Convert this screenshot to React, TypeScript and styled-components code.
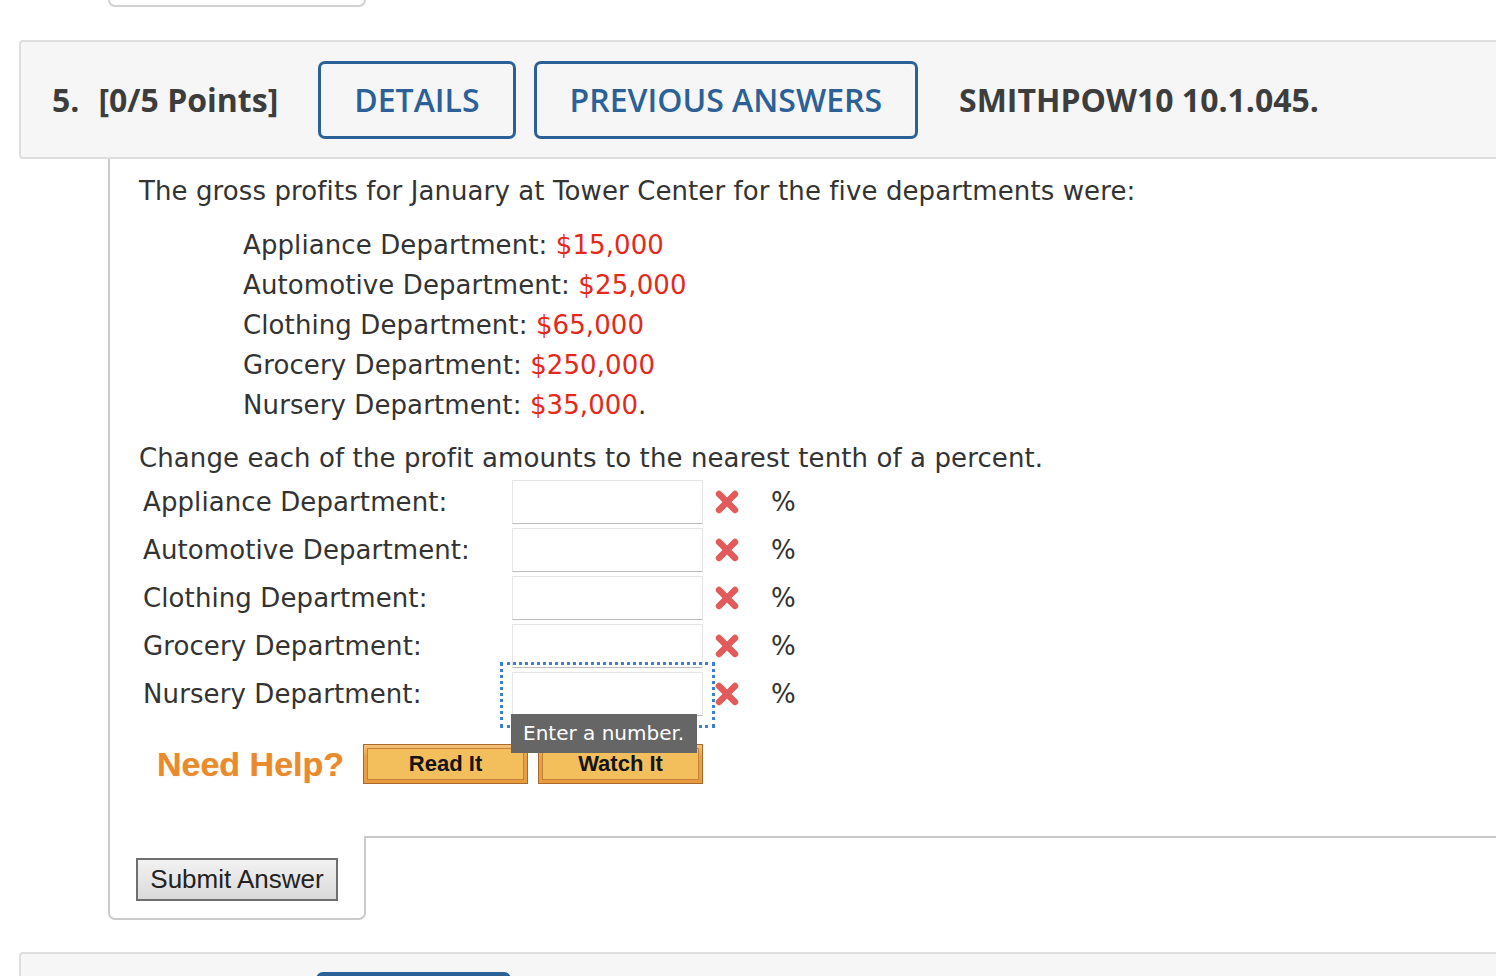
import styled, { createGlobalStyle } from "styled-components";

const GlobalStyle = createGlobalStyle`
  html, body {
    margin: 0;
    padding: 0;
    background: #fff;
    overflow: hidden;
  }
  body {
    font-family: "DejaVu Sans", Verdana, sans-serif;
    color: #333;
  }
`;

const Page = styled.div`
  width: 1560px;
`;

const PrevTab = styled.div`
  margin-left: 108px;
  width: 254px;
  height: 5px;
  border: 2px solid #d2d2d2;
  border-top: none;
  border-radius: 0 0 7px 7px;
`;

const Question = styled.section`
  margin-top: 33px;
`;

const Header = styled.div`
  margin-left: 19px;
  height: 115px;
  display: flex;
  align-items: center;
  padding-left: 31px;
  background: #f6f6f6;
  border: 2px solid #dedede;
  border-radius: 4px;
  font-family: "Open Sans", sans-serif;
  color: #3d3d3d;
`;

const Number = styled.span`
  font-size: 32px;
  font-weight: 700;
  margin-right: 19px;
`;

const Points = styled.span`
  font-size: 32px;
  font-weight: 700;
  margin-right: 40px;
`;

const HeaderButton = styled.button<{ $filled?: boolean }>`
  box-sizing: border-box;
  height: 78px;
  padding: 0 33px;
  margin-right: 18px;
  border: 3px solid #2b6197;
  border-radius: 7px;
  background: ${(p) => (p.$filled ? "#2b6197" : "transparent")};
  color: ${(p) => (p.$filled ? "#fff" : "#2b6197")};
  font-family: "Open Sans", sans-serif;
  font-size: 32px;
  font-weight: 600;
  cursor: pointer;
  &:last-of-type {
    margin-right: 41px;
  }
`;

const Code = styled.span`
  font-size: 32px;
  font-weight: 700;
`;

const Body = styled.div`
  margin-left: 108px;
`;

const Content = styled.div`
  border-left: 2px solid #cbcbcb;
  padding: 14px 0 52px 29px;
  font-size: 26px;
  letter-spacing: 0.1px;
`;

const Intro = styled.p`
  margin: 0;
  line-height: 36px;
`;

const DeptList = styled.div`
  margin-top: 16px;
  padding-left: 104px;
`;

const DeptLine = styled.div`
  line-height: 40px;
`;

const Amount = styled.span`
  color: #e4291a;
`;

const Task = styled.p`
  margin: 15px 0 0;
  line-height: 36px;
`;

const AnswerTable = styled.div`
  margin-top: 2px;
`;

const AnswerRow = styled.div`
  display: flex;
  align-items: center;
  height: 48px;
`;

const Label = styled.span`
  width: 369px;
  padding-left: 4px;
`;

const InputWrap = styled.span<{ $focused?: boolean }>`
  position: relative;
  display: inline-flex;
  ${(p) =>
    p.$focused &&
    `
    &::after {
      content: "";
      position: absolute;
      top: -10px;
      left: -12px;
      right: -12px;
      bottom: -12px;
      border: 3px dotted #3a7fd8;
      pointer-events: none;
    }
  `}
`;

const AnswerInput = styled.input`
  box-sizing: border-box;
  width: 191px;
  height: 44px;
  border: 1px solid #e6e6e6;
  border-bottom-color: #bdbdbd;
  background: #fff;
  outline: none;
  font-size: 22px;
`;

const Tooltip = styled.span`
  position: absolute;
  left: -1px;
  top: 42px;
  z-index: 2;
  height: 39px;
  line-height: 39px;
  padding: 0 13px 0 12px;
  background: #666;
  color: #fff;
  font-size: 20px;
  letter-spacing: 0;
  white-space: nowrap;
`;

const Wrong = styled.svg`
  margin-left: 10px;
  flex: none;
`;

const Percent = styled.span`
  margin-left: 30px;
`;

const HelpRow = styled.div`
  margin-top: 26px;
  padding-left: 18px;
  display: flex;
  align-items: center;
  height: 40px;
`;

const NeedHelp = styled.span`
  font-family: "Liberation Sans", Arial, sans-serif;
  font-size: 34px;
  font-weight: 700;
  letter-spacing: 0;
  color: #e98b2d;
  text-shadow: 0 0 1px rgba(233, 139, 45, 0.6);
  margin-right: 19px;
`;

const HelpButton = styled.button`
  box-sizing: border-box;
  width: 165px;
  height: 40px;
  margin-right: 10px;
  padding: 3px;
  border: 1px solid #a86a28;
  background: linear-gradient(#f4c37d, #eba147 30%, #e99a3e);
  cursor: pointer;
`;

const HelpFace = styled.span`
  display: flex;
  align-items: center;
  justify-content: center;
  height: 100%;
  box-sizing: border-box;
  border: 1px solid #c4813a;
  background: #f3bf5c;
  font-family: "Liberation Sans", Arial, sans-serif;
  font-size: 22px;
  font-weight: 700;
  color: #141414;
`;

const Footer = styled.div`
  display: flex;
`;

const SubmitTab = styled.div`
  width: 202px;
  padding: 22px 26px 17px;
  border: 2px solid #cbcbcb;
  border-top: none;
  border-radius: 0 0 7px 7px;
`;

const Filler = styled.div`
  flex: 1;
  border-top: 2px solid #c8c8c8;
`;

const SubmitButton = styled.button`
  box-sizing: border-box;
  width: 202px;
  height: 43px;
  padding: 0;
  border: 2px solid #6f6f6f;
  background: linear-gradient(#f2f2f2, #dadada);
  font-family: "Liberation Sans", Arial, sans-serif;
  font-size: 26px;
  color: #222;
  cursor: pointer;
`;

const NextQuestion = styled.section`
  margin-top: 32px;
`;

const NextHeader = styled(Header)`
  align-items: flex-start;
  padding: 18px 0 0 295px;
`;

const NextDetails = styled.span`
  box-sizing: border-box;
  width: 195px;
  height: 78px;
  border-radius: 7px;
  background: #2b6197;
`;

const departments = [
  { name: "Appliance Department", amount: "$15,000" },
  { name: "Automotive Department", amount: "$25,000" },
  { name: "Clothing Department", amount: "$65,000" },
  { name: "Grocery Department", amount: "$250,000" },
  { name: "Nursery Department", amount: "$35,000" },
];

const WrongMark = () => (
  <Wrong width="28" height="28" viewBox="0 0 28 28">
    <path
      d="M6 6 L22 22 M22 6 L6 22"
      stroke="#e35a5a"
      strokeWidth="6.5"
      strokeLinecap="round"
      fill="none"
    />
  </Wrong>
);

export default function App() {
  return (
    <Page>
      <GlobalStyle />
      <PrevTab />
      <Question>
        <Header>
          <Number>5.</Number>
          <Points>[0/5 Points]</Points>
          <HeaderButton>DETAILS</HeaderButton>
          <HeaderButton>PREVIOUS ANSWERS</HeaderButton>
          <Code>SMITHPOW10 10.1.045.</Code>
        </Header>
        <Body>
          <Content>
            <Intro>
              The gross profits for January at Tower Center for the five
              departments were:
            </Intro>
            <DeptList>
              {departments.map((d, i) => (
                <DeptLine key={d.name}>
                  {d.name}: <Amount>{d.amount}</Amount>
                  {i === departments.length - 1 ? "." : ""}
                </DeptLine>
              ))}
            </DeptList>
            <Task>
              Change each of the profit amounts to the nearest tenth of a
              percent.
            </Task>
            <AnswerTable>
              {departments.map((d, i) => {
                const last = i === departments.length - 1;
                return (
                  <AnswerRow key={d.name}>
                    <Label>{d.name}:</Label>
                    <InputWrap $focused={last}>
                      <AnswerInput type="text" aria-label={d.name} />
                      {last && <Tooltip>Enter a number.</Tooltip>}
                    </InputWrap>
                    <WrongMark />
                    <Percent>%</Percent>
                  </AnswerRow>
                );
              })}
            </AnswerTable>
            <HelpRow>
              <NeedHelp>Need Help?</NeedHelp>
              <HelpButton>
                <HelpFace>Read It</HelpFace>
              </HelpButton>
              <HelpButton>
                <HelpFace>Watch It</HelpFace>
              </HelpButton>
            </HelpRow>
          </Content>
          <Footer>
            <SubmitTab>
              <SubmitButton>Submit Answer</SubmitButton>
            </SubmitTab>
            <Filler />
          </Footer>
        </Body>
      </Question>
      <NextQuestion>
        <NextHeader>
          <NextDetails />
        </NextHeader>
      </NextQuestion>
    </Page>
  );
}
